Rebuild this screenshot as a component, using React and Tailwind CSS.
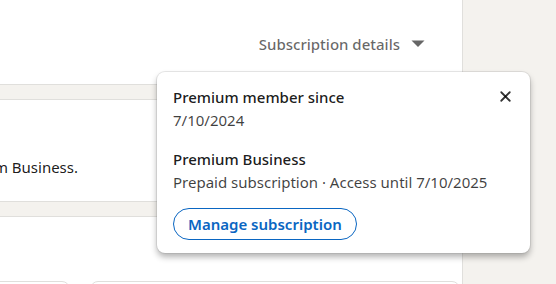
import { X } from "lucide-react";

export default function App() {
  return (
    <div className="relative w-[556px] h-[284px] overflow-hidden bg-[#f4f2ee] font-['Noto_Sans',sans-serif] text-[15px]">
      <div className="flex h-full">
        {/* main column */}
        <div className="w-[463px] shrink-0 bg-white border-r border-[#e0dfdc] flex flex-col">
          <div className="h-[84px] flex items-start justify-end pr-[37px] pt-[32px]">
            <button className="flex items-center gap-[11px] text-[rgba(0,0,0,0.6)] font-medium leading-[24px]">
              Subscription details
              <svg width="14" height="8" viewBox="0 0 14 8" className="fill-current">
                <path d="M0.5 0.5h13L7 7z" />
              </svg>
            </button>
          </div>

          <div className="bg-[#f4f2ee] border-t border-[#e0dfdc] pt-[14px] pb-[14px]">
            <div className="h-[103px] bg-white border-y border-[#e0dfdc] pt-[55px]">
              <div className="w-[78px] flex justify-end">
                <p className="shrink-0 text-[rgba(0,0,0,0.9)] leading-[24px] whitespace-nowrap">
                  You have access to all features of Premium Business.
                </p>
              </div>
            </div>
          </div>

          <div className="flex-1 border-t border-[#e0dfdc] relative">
            <div className="absolute top-[64px] left-[-40px] flex gap-[20px]">
              <div className="w-[110px] h-[60px] rounded-lg border border-[#e0dfdc]" />
              <div className="w-[370px] h-[60px] rounded-lg border border-[#e0dfdc]" />
            </div>
          </div>
        </div>
      </div>

      {/* popover */}
      <div className="absolute left-[157px] top-[72px] w-[373px] rounded-lg bg-white shadow-[0_0_0_1px_rgba(140,140,140,0.2),0_4px_6px_rgba(0,0,0,0.3)] px-[16px] pt-[14px] pb-[13px] text-[rgba(0,0,0,0.9)] leading-[23px]">
        <button className="absolute top-[12px] right-[13px] w-[24px] h-[24px] flex items-center justify-center text-[rgba(0,0,0,0.8)]">
          <X size={17} strokeWidth={2.5} />
        </button>
        <p className="font-medium">Premium member since</p>
        <p className="text-[rgba(0,0,0,0.75)]">7/10/2024</p>
        <p className="font-medium mt-[16px]">Premium Business</p>
        <p className="text-[rgba(0,0,0,0.75)]">Prepaid subscription · Access until 7/10/2025</p>
        <button className="mt-[14px] h-[32px] px-[14px] rounded-full border border-[#0a66c2] text-[#0a66c2] font-semibold">
          Manage subscription
        </button>
      </div>
    </div>
  );
}
